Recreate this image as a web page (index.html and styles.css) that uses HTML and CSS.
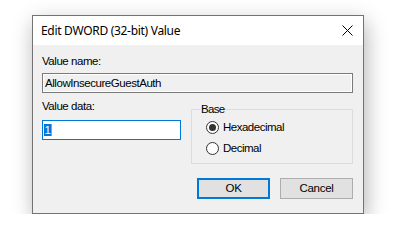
FILE: index.html
```html
<!DOCTYPE html>
<html>
<head>
<meta charset="utf-8">
<link rel="stylesheet" href="styles.css">
</head>
<body>
<div class="stage">
  <div class="dialog">
    <div class="titlebar">
      <span class="title">Edit DWORD (32-bit) Value</span>
      <svg class="close" width="11" height="11" viewBox="0 0 11 11"><path d="M0.5 0.5 L10.5 10.5 M10.5 0.5 L0.5 10.5" stroke="#000" stroke-width="1"/></svg>
    </div>
    <div class="body">
      <div class="label">Value name:</div>
      <div class="namefield">AllowInsecureGuestAuth</div>
      <div class="row">
        <div class="datacol">
          <div class="label">Value data:</div>
          <div class="datafield"><span class="sel">1</span><span class="caret"></span></div>
        </div>
        <fieldset class="base">
          <legend>Base</legend>
          <label class="radio"><span class="dot checked"></span>Hexadecimal</label>
          <label class="radio"><span class="dot"></span>Decimal</label>
        </fieldset>
      </div>
      <div class="buttons">
        <div class="btn default">OK</div>
        <div class="btn">Cancel</div>
      </div>
    </div>
  </div>
</div>
</body>
</html>
```
FILE: styles.css
```css
html, body { margin: 0; padding: 0; background: #fff; }
body { font-family: "Liberation Sans", Arial, sans-serif; font-size: 11.5px; color: #000; letter-spacing: -0.45px; }
.stage { padding: 15px 0 0 32px; }
.dialog {
  width: 330px; height: 197px;
  border: 1px solid #737373;
  background: #f0f0f0;
  box-shadow: 2px 7px 20px rgba(0,0,0,0.3);
  display: flex; flex-direction: column;
}
.titlebar {
  height: 29px; background: #fff;
  display: flex; align-items: center; justify-content: space-between;
  padding: 0 10px 0 8px;
}
.title { font-family: "Noto Sans", sans-serif; font-size: 12px; letter-spacing: -0.3px; line-height: 16px; padding-top: 1px; }
.close { display: block; }
.body { padding: 10px 10px 0 9px; display: flex; flex-direction: column; }
.label { line-height: 13px; height: 13px; }
.namefield {
  margin-top: 5px; height: 18px; line-height: 18px;
  border: 1px solid #7a7a7a; box-shadow: inset 0 0 0 1px #fff;
  background: #f0f0f0; padding-left: 2px;
}
.row { display: flex; margin-top: 7px; gap: 10px; }
.datacol { width: 139px; }
.datafield {
  margin-top: 7px; height: 18px; box-sizing: content-box;
  border: 1px solid #0078d7; background: #fff;
  display: flex; align-items: flex-start; padding-left: 1px;
}
.sel { background: #0078d7; color: #fff; line-height: 12px; height: 12px; margin-top: 3px; padding: 0 0.5px; letter-spacing: 0; }
.caret { width: 1px; height: 12px; margin-top: 3px; background: #e98a3c; }
fieldset.base {
  margin: 2px 0 0 0; padding: 5px 0 0 14px; width: 162px; height: 62px; box-sizing: border-box;
  border: 1px solid #dcdcdc; border-radius: 0;
  display: flex; flex-direction: column; gap: 8px;
}
legend { padding: 0 1px; margin-left: -6px; line-height: 14px; letter-spacing: -0.7px; }
.radio { display: flex; align-items: center; gap: 4px; line-height: 13px; height: 13px; letter-spacing: -0.5px; }
.dot {
  width: 11px; height: 11px; border: 1px solid #333; border-radius: 50%; background: #fff;
  display: flex; align-items: center; justify-content: center; flex: none;
}
.dot.checked::after { content: ""; width: 7px; height: 7px; border-radius: 50%; background: #333; }
.buttons { display: flex; justify-content: flex-end; gap: 10px; margin-top: 14px; }
.btn {
  width: 71px; height: 19px; line-height: 19px; text-align: center;
  border: 1px solid #adadad; background: #e1e1e1; letter-spacing: -0.3px;
}
.btn.default { border: 2px solid #0078d7; width: 69px; height: 17px; line-height: 17px; }
```
